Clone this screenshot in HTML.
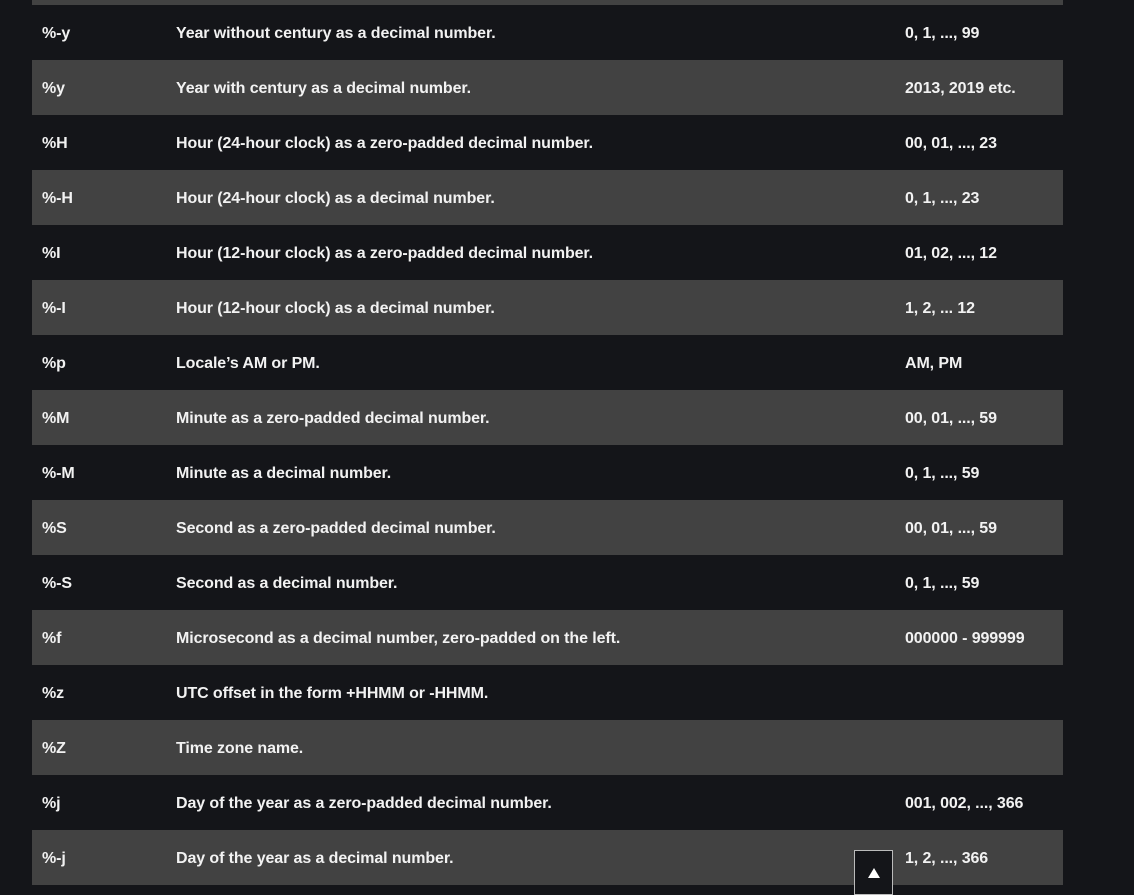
<!DOCTYPE html>
<html><head><meta charset="utf-8"><style>
html,body{margin:0;padding:0;background:#141519;width:1134px;height:889px;overflow:hidden;font-family:"Liberation Sans",sans-serif;}
.t{position:absolute;left:32px;top:0;width:1031px;}
.top{height:5px;background:#424242;}
.r{height:55px;position:relative;color:#f2f2f2;font-size:16px;font-weight:bold;letter-spacing:-0.1px;}
.r.g{background:#424242;}
.r span{position:absolute;top:0;line-height:58px;white-space:nowrap;}
.a{left:10px}.b{left:144px}.c{left:873px}
.btn{position:absolute;left:854px;top:850px;width:39px;height:45px;border:1px solid #bbb;background:#141519;box-sizing:border-box;}
.btn:after{content:"";position:absolute;left:13px;top:17px;border-left:6px solid transparent;border-right:6px solid transparent;border-bottom:10px solid #fff;}
</style></head><body>
<div class="t">
<div class="top"></div>
<div class="r"><span class="a">%-y</span><span class="b">Year without century as a decimal number.</span><span class="c">0, 1, ..., 99</span></div>
<div class="r g"><span class="a">%y</span><span class="b">Year with century as a decimal number.</span><span class="c">2013, 2019 etc.</span></div>
<div class="r"><span class="a">%H</span><span class="b">Hour (24-hour clock) as a zero-padded decimal number.</span><span class="c">00, 01, ..., 23</span></div>
<div class="r g"><span class="a">%-H</span><span class="b">Hour (24-hour clock) as a decimal number.</span><span class="c">0, 1, ..., 23</span></div>
<div class="r"><span class="a">%I</span><span class="b">Hour (12-hour clock) as a zero-padded decimal number.</span><span class="c">01, 02, ..., 12</span></div>
<div class="r g"><span class="a">%-I</span><span class="b">Hour (12-hour clock) as a decimal number.</span><span class="c">1, 2, ... 12</span></div>
<div class="r"><span class="a">%p</span><span class="b">Locale’s AM or PM.</span><span class="c">AM, PM</span></div>
<div class="r g"><span class="a">%M</span><span class="b">Minute as a zero-padded decimal number.</span><span class="c">00, 01, ..., 59</span></div>
<div class="r"><span class="a">%-M</span><span class="b">Minute as a decimal number.</span><span class="c">0, 1, ..., 59</span></div>
<div class="r g"><span class="a">%S</span><span class="b">Second as a zero-padded decimal number.</span><span class="c">00, 01, ..., 59</span></div>
<div class="r"><span class="a">%-S</span><span class="b">Second as a decimal number.</span><span class="c">0, 1, ..., 59</span></div>
<div class="r g"><span class="a">%f</span><span class="b">Microsecond as a decimal number, zero-padded on the left.</span><span class="c">000000 - 999999</span></div>
<div class="r"><span class="a">%z</span><span class="b">UTC offset in the form +HHMM or -HHMM.</span></div>
<div class="r g"><span class="a">%Z</span><span class="b">Time zone name.</span></div>
<div class="r"><span class="a">%j</span><span class="b">Day of the year as a zero-padded decimal number.</span><span class="c">001, 002, ..., 366</span></div>
<div class="r g"><span class="a">%-j</span><span class="b">Day of the year as a decimal number.</span><span class="c">1, 2, ..., 366</span></div>
</div>
<div class="btn"></div>
</body></html>
